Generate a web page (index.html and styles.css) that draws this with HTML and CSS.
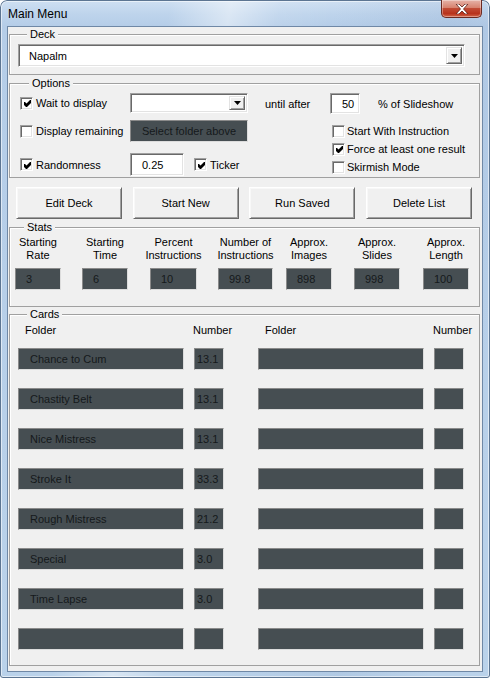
FILE: index.html
```html
<!DOCTYPE html>
<html>
<head>
<meta charset="utf-8">
<title>Main Menu</title>
<link rel="stylesheet" href="styles.css">
</head>
<body>
<div class="window">
  <div class="titlebar">
    <span class="title">Main Menu</span>
    <div class="close">
      <svg viewBox="0 0 14 10" width="14" height="10"><path d="M1 0h3l3 3 3-3h3l-4.5 5 4.5 5h-3l-3-3-3 3h-3l4.5-5z" fill="#fff" stroke="#5a2018" stroke-width="0.8" stroke-linejoin="round"/></svg>
    </div>
  </div>
  <div class="client">
    <fieldset class="group deck">
      <legend>Deck</legend>
      <div class="combo deck-combo">
        <span class="combo-text">Napalm</span>
        <span class="drop"><svg viewBox="0 0 7 4" width="7" height="4"><path d="M0 0h7L3.5 4z"/></svg></span>
      </div>
    </fieldset>

    <fieldset class="group options">
      <legend>Options</legend>
      <div class="options-body">
        <div class="opt-left">
          <div class="orow r1">
            <label class="chk lcol"><span class="box"><svg class="tick" viewBox="0 0 7 7" width="7" height="7"><polygon points="0,2 1,2 2.5,3.5 6,0 7,0 7,3 3,7 2,7 0,5"/></svg></span>Wait to display</label>
            <div class="combo wait-combo">
              <span class="combo-text"></span>
              <span class="drop"><svg viewBox="0 0 7 4" width="7" height="4"><path d="M0 0h7L3.5 4z"/></svg></span>
            </div>
          </div>
          <div class="orow r2">
            <label class="chk lcol"><span class="box"></span>Display remaining</label>
            <div class="dark folder-select">Select folder above</div>
          </div>
          <div class="orow r3">
            <label class="chk lcol"><span class="box"><svg class="tick" viewBox="0 0 7 7" width="7" height="7"><polygon points="0,2 1,2 2.5,3.5 6,0 7,0 7,3 3,7 2,7 0,5"/></svg></span>Randomness</label>
            <div class="textbox rand">0.25</div>
            <label class="chk ticker"><span class="box"><svg class="tick" viewBox="0 0 7 7" width="7" height="7"><polygon points="0,2 1,2 2.5,3.5 6,0 7,0 7,3 3,7 2,7 0,5"/></svg></span>Ticker</label>
          </div>
        </div>
        <div class="opt-right">
          <div class="until-row">
            <span class="until-label">until after</span>
            <div class="textbox pct">50</div>
            <span class="pct-label">% of Slideshow</span>
          </div>
          <div class="chk-list">
            <label class="chk"><span class="box"></span>Start With Instruction</label>
            <label class="chk"><span class="box"><svg class="tick" viewBox="0 0 7 7" width="7" height="7"><polygon points="0,2 1,2 2.5,3.5 6,0 7,0 7,3 3,7 2,7 0,5"/></svg></span>Force at least one result</label>
            <label class="chk"><span class="box"></span>Skirmish Mode</label>
          </div>
        </div>
      </div>
    </fieldset>

    <div class="buttons">
      <button class="btn">Edit Deck</button>
      <button class="btn">Start New</button>
      <button class="btn">Run Saved</button>
      <button class="btn">Delete List</button>
    </div>

    <fieldset class="group stats">
      <legend>Stats</legend>
      <div class="stats-grid">
        <div class="stat"><div class="stat-label"><span>Starting<br>Rate</span></div><div class="dark sbox">3</div></div>
        <div class="stat"><div class="stat-label"><span>Starting<br>Time</span></div><div class="dark sbox">6</div></div>
        <div class="stat"><div class="stat-label w47"><span>Percent<br>Instructions</span></div><div class="dark sbox w47">10</div></div>
        <div class="stat"><div class="stat-label w55"><span>Number of<br>Instructions</span></div><div class="dark sbox w55">99.8</div></div>
        <div class="stat"><div class="stat-label"><span>Approx.<br>Images</span></div><div class="dark sbox">898</div></div>
        <div class="stat"><div class="stat-label"><span>Approx.<br>Slides</span></div><div class="dark sbox">998</div></div>
        <div class="stat"><div class="stat-label"><span>Approx.<br>Length</span></div><div class="dark sbox">100</div></div>
      </div>
    </fieldset>

    <fieldset class="group cards">
      <legend>Cards</legend>
      <div class="cards-head">
        <span class="h-folder">Folder</span>
        <span class="h-num">Number</span>
        <span class="h-folder c3">Folder</span>
        <span class="h-num">Number</span>
      </div>
      <div class="cards-grid">
        <div class="dark fbox">Chance to Cum</div><div class="dark nbox">13.1</div><div class="dark fbox c3"></div><div class="dark nbox"></div>
        <div class="dark fbox">Chastity Belt</div><div class="dark nbox">13.1</div><div class="dark fbox c3"></div><div class="dark nbox"></div>
        <div class="dark fbox">Nice Mistress</div><div class="dark nbox">13.1</div><div class="dark fbox c3"></div><div class="dark nbox"></div>
        <div class="dark fbox">Stroke It</div><div class="dark nbox">33.3</div><div class="dark fbox c3"></div><div class="dark nbox"></div>
        <div class="dark fbox">Rough Mistress</div><div class="dark nbox">21.2</div><div class="dark fbox c3"></div><div class="dark nbox"></div>
        <div class="dark fbox">Special</div><div class="dark nbox">3.0</div><div class="dark fbox c3"></div><div class="dark nbox"></div>
        <div class="dark fbox">Time Lapse</div><div class="dark nbox">3.0</div><div class="dark fbox c3"></div><div class="dark nbox"></div>
        <div class="dark fbox"></div><div class="dark nbox"></div><div class="dark fbox c3"></div><div class="dark nbox"></div>
      </div>
    </fieldset>
  </div>
</div>
</body>
</html>
```

FILE: styles.css
```css
* { box-sizing: border-box; }
html, body { margin: 0; padding: 0; }
body {
  width: 490px;
  height: 678px;
  overflow: hidden;
  background: #ffffff;
  font-family: "Liberation Sans", Arial, sans-serif;
  font-size: 11px;
  color: #000;
}

.window {
  width: 490px;
  height: 678px;
  display: flex;
  flex-direction: column;
  padding: 0 7px 6px;
  border-radius: 7px 7px 3px 3px;
  background:
    linear-gradient(100deg, rgba(255,255,255,0) 28%, rgba(255,255,255,0.45) 38%, rgba(255,255,255,0.1) 46%, rgba(255,255,255,0) 55%, rgba(120,150,190,0.15) 75%, rgba(255,255,255,0) 90%),
    linear-gradient(180deg, #cfe0f2 0px, #bed4ec 14px, #b5cde8 26px, #bad2ea 100%);
  box-shadow: inset 0 0 0 1px #5c7592, inset 0 0 0 2px rgba(255,255,255,0.55);
}

.titlebar {
  height: 26px;
  display: flex;
  align-items: flex-start;
  padding-left: 1px;
}
.title {
  font-size: 12px;
  line-height: 14px;
  margin-top: 7px;
  color: #000;
}
.close {
  margin-left: auto;
  margin-right: 1px;
  width: 41px;
  height: 18px;
  border: 1px solid #6b2a22;
  border-top: none;
  border-radius: 0 0 5px 5px;
  background: linear-gradient(180deg, #e6b3a8 0%, #d7826f 45%, #c14a34 50%, #b8331d 80%, #d2664a 100%);
  box-shadow: inset 0 0 0 1px rgba(255,255,255,0.35);
  display: flex;
  align-items: center;
  justify-content: center;
}

.client {
  flex: 1;
  background: #f0f0f0;
  border: 1px solid #6f88a6;
  display: flex;
  flex-direction: column;
}

/* group boxes */
.group {
  margin: 0 2px 0 1px;
  padding: 0;
  border: 1px solid #a0a0a0;
  box-shadow: inset 1px 1px 0 #ffffff;
  min-width: 0;
}
.group legend {
  margin-left: 9px;
  padding: 0 3px;
  line-height: 13px;
  background: #f0f0f0;
}

.deck { margin-top: 1px; padding: 3px 13px 7px 8px; }
.options { margin-top: 2px; padding: 3px 0 1px 10px; }
.stats { margin-top: 2px; padding: 2px 0 16px 5px; }
.cards { margin-top: 1px; padding: 3px 0 15px 8px; }

/* sunken white controls */
.combo, .textbox {
  background: #fff;
  border: 1px solid;
  border-color: #a0a0a0 #ffffff #ffffff #a0a0a0;
  box-shadow: inset 1px 1px 0 #696969, inset -1px -1px 0 #e3e3e3;
  display: flex;
  align-items: center;
}
.combo-text { flex: 1; padding-left: 10px; }
.drop {
  width: 16px;
  height: calc(100% - 4px);
  margin-right: 2px;
  background: #f0f0f0;
  border: 1px solid;
  border-color: #e3e3e3 #696969 #696969 #e3e3e3;
  box-shadow: inset 1px 1px 0 #fff, inset -1px -1px 0 #a0a0a0;
  display: flex;
  align-items: center;
  justify-content: center;
}
.deck-combo { width: 447px; height: 23px; }
.wait-combo { width: 118px; height: 20px; }

.textbox { padding-left: 11px; }
.rand { width: 54px; height: 23px; }
.pct { width: 30px; height: 21px; }

/* checkboxes */
.chk {
  display: flex;
  align-items: center;
  white-space: nowrap;
}
.box {
  width: 13px;
  height: 13px;
  flex: none;
  margin-right: 3px;
  background: #fff;
  border: 1px solid;
  border-color: #a0a0a0 #ffffff #ffffff #a0a0a0;
  box-shadow: inset 1px 1px 0 #696969, inset -1px -1px 0 #e3e3e3;
  display: flex;
  align-items: center;
  justify-content: center;
}
.tick { fill: #000; margin: 1px 0 0 1px; }

/* options */
.options-body { display: flex; }
.opt-left { display: flex; flex-direction: column; }
.orow { display: flex; align-items: center; }
.r1 { height: 20px; }
.r2 { height: 22px; margin-top: 7px; }
.r3 { height: 23px; margin-top: 11px; }
.lcol { width: 110px; }
.ticker { margin-left: 10px; }

.dark {
  background: #464e52;
  border: 1px solid;
  border-color: #8a8a8a #dcdcdc #dcdcdc #8a8a8a;
  color: #15191b;
  display: flex;
  align-items: center;
  white-space: nowrap;
  overflow: hidden;
}
.folder-select {
  width: 118px;
  height: 22px;
  justify-content: center;
}

.opt-right { margin-left: 17px; display: flex; flex-direction: column; }
.until-row { display: flex; align-items: center; height: 21px; }
.until-label { width: 65px; flex: none; }
.pct-label { margin-left: 18px; }
.chk-list {
  margin-left: 67px;
  margin-top: 8px;
  display: flex;
  flex-direction: column;
}
.chk-list .chk { height: 18px; }
.chk-list .box { margin-right: 2px; }

/* buttons */
.buttons {
  display: flex;
  justify-content: space-between;
  margin-top: 9px;
  padding: 0 10px 0 8px;
}
.btn {
  width: 106px;
  height: 32px;
  padding: 0;
  font: inherit;
  color: #000;
  background: #f0f0f0;
  border: 1px solid;
  border-color: #ffffff #696969 #696969 #ffffff;
  box-shadow: inset 1px 1px 0 #f8f8f8, inset -1px -1px 0 #a0a0a0;
}

/* stats */
.stats-grid {
  display: grid;
  grid-template-columns: 67px 68px 68px 68px 68px 69px 46px;
}
.stat { display: flex; flex-direction: column; align-items: flex-start; }
.stat-label {
  width: 46px;
  height: 26px;
  display: flex;
  justify-content: center;
  line-height: 13px;
  white-space: nowrap;
  text-align: center;
}
.stat-label span { display: block; }
.sbox {
  width: 46px;
  height: 22px;
  margin-top: 6px;
  padding-left: 10px;
}
.w47 { width: 47px; }
.w55 { width: 55px; }

/* cards */
.cards-head, .cards-grid {
  display: grid;
  grid-template-columns: 166px 30px 190px 30px;
  column-gap: 10px;
}
.cards-head { line-height: 13px; margin-bottom: 11px; white-space: nowrap; }
.h-folder { padding-left: 7px; }
.h-num { margin-left: -1px; }
.cards-head .c3 { justify-self: end; width: 166px; }
.cards-grid { row-gap: 18px; }
.fbox { height: 22px; padding-left: 11px; }
.fbox.c3 { justify-self: end; width: 166px; }
.nbox { height: 22px; padding-left: 2px; }
```
